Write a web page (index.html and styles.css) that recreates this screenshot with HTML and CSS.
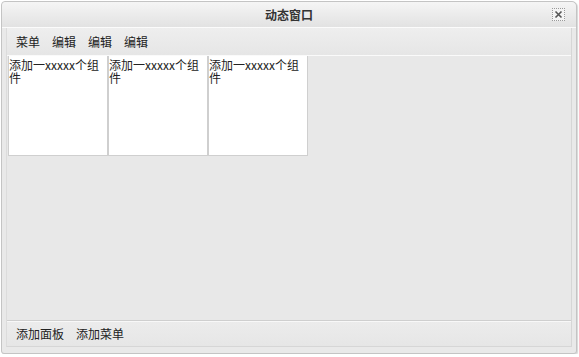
FILE: index.html
```html
<!DOCTYPE html>
<html>
<head>
<meta charset="utf-8">
<link rel="stylesheet" href="styles.css">
</head>
<body>
<div class="window">
  <div class="titlebar">
    <span class="title">动态窗口</span>
    <span class="close"><svg width="11" height="11" viewBox="0 0 11 11"><path d="M2.5 2.5 L8.5 8.5 M8.5 2.5 L2.5 8.5" stroke="#555" stroke-width="1.6"/></svg></span>
  </div>
  <div class="body">
    <div class="menubar">
      <span class="item">菜单</span>
      <span class="item">编辑</span>
      <span class="item">编辑</span>
      <span class="item">编辑</span>
    </div>
    <div class="content">
      <div class="panel">添加一xxxxx个组件</div>
      <div class="panel">添加一xxxxx个组件</div>
      <div class="panel">添加一xxxxx个组件</div>
    </div>
    <div class="footer">
      <span class="item">添加面板</span>
      <span class="item">添加菜单</span>
    </div>
  </div>
</div>
</body>
</html>
```

FILE: styles.css
```css
html, body {
  margin: 0;
  padding: 0;
  background: #ffffff;
}
body {
  font-family: "Noto Sans CJK SC", "Liberation Sans", sans-serif;
  font-size: 12px;
  color: #222;
}
.window {
  box-sizing: border-box;
  margin: 1px 0 0 1px;
  width: 576px;
  height: 353px;
  border: 1px solid #c4c4c4;
  border-radius: 4px 5px 3px 3px;
  background: #e9e9e9;
  display: flex;
  flex-direction: column;
  padding: 0 4px 6px 4px;
  box-shadow: 1px 1px 1px #d8d8d8;
}
.titlebar {
  height: 25px;
  margin: 0 -4px;
  position: relative;
  display: flex;
  align-items: center;
  justify-content: center;
  background: linear-gradient(#f5f5f5, #e2e2e2);
  border-radius: 4px 5px 0 0;
  border-bottom: 1px solid #fbfbfb;
}
.title {
  font-weight: bold;
  color: #333;
  font-size: 12px;
}
.close {
  position: absolute;
  right: 11px;
  top: 6px;
  width: 11px;
  height: 11px;
  border: 1px dotted #999;
  background: #f4f4f4;
  display: flex;
}
.body {
  flex: 1;
  display: flex;
  flex-direction: column;
  border: 1px solid #d6d6d6;
  border-top: none;
  border-left: 1px solid #dcdcdc;
  background: #e8e8e8;
}
.menubar {
  height: 27px;
  display: flex;
  align-items: center;
  gap: 12px;
  padding-left: 9px;
  background: linear-gradient(#eeeeee, #e6e6e6);
  border-bottom: 1px solid #fafafa;
}
.item {
  color: #222;
}
.content {
  flex: 1;
  display: flex;
  align-items: flex-start;
  padding-left: 1px;
}
.panel {
  box-sizing: border-box;
  width: 100px;
  height: 100px;
  background: #fff;
  border: 1px solid #cfcfcf;
  border-top: none;
  line-height: 13px;
  padding-top: 2px;
  word-break: break-all;
}
.footer {
  height: 25px;
  display: flex;
  align-items: center;
  gap: 12px;
  padding-left: 9px;
  border-top: 1px solid #cfcfcf;
  box-shadow: inset 0 1px 0 #f8f8f8;
  background: linear-gradient(#ececec, #e6e6e6);
}
```
